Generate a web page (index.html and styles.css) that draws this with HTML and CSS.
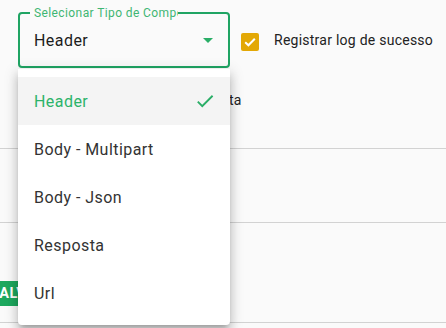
FILE: index.html
```html
<!DOCTYPE html>
<html lang="pt">
<head>
<meta charset="utf-8">
<title>Configuração</title>
<link rel="stylesheet" href="styles.css">
</head>
<body>
<div class="page">
  <div class="top-row">
    <div class="field">
      <span class="field-label">Selecionar Tipo de Componente</span>
      <span class="field-value">Header</span>
      <svg class="field-arrow" width="24" height="24" viewBox="0 0 24 24"><path d="M7 10l5 5 5-5z"/></svg>
    </div>
    <label class="check-row">
      <span class="checkbox"><svg width="18" height="18" viewBox="0 0 18 18"><path d="M4.2 9.2l3.2 3.1 6.4-6.6" fill="none" stroke="#fff" stroke-width="2"/></svg></span>
      <span class="check-label">Registrar log de sucesso</span>
    </label>
  </div>
  <div class="second-row">
    <label class="check-row">
      <span class="checkbox"><svg width="18" height="18" viewBox="0 0 18 18"><path d="M4.2 9.2l3.2 3.1 6.4-6.6" fill="none" stroke="#fff" stroke-width="2"/></svg></span>
      <span class="check-label">Registrar log de resposta</span>
    </label>
  </div>
  <div class="divider first"></div>
  <div class="section"></div>
  <div class="divider"></div>
  <div class="actions">
    <button class="save-btn">SALVAR</button>
  </div>
  <div class="divider last"></div>

  <ul class="menu">
    <li class="menu-item selected">Header
      <svg class="menu-check" width="22" height="22" viewBox="0 0 24 24"><path d="M9 16.17L4.83 12l-1.42 1.41L9 19 21 7l-1.41-1.41z"/></svg>
    </li>
    <li class="menu-item">Body - Multipart</li>
    <li class="menu-item">Body - Json</li>
    <li class="menu-item">Resposta</li>
    <li class="menu-item">Url</li>
  </ul>
</div>
</body>
</html>
```
FILE: styles.css
```css
html, body {
  margin: 0;
  padding: 0;
  background: #fafafa;
  width: 446px;
  height: 328px;
  overflow: hidden;
  font-family: Roboto, "Liberation Sans", sans-serif;
  color: #222;
}

.page {
  position: relative;
  height: 328px;
}

.top-row {
  display: flex;
  align-items: center;
  padding: 12px 0 0 18px;
}

.field {
  position: relative;
  box-sizing: border-box;
  width: 212px;
  height: 56px;
  border: 2px solid #1fa463;
  border-radius: 4px;
  display: flex;
  align-items: center;
  justify-content: space-between;
  padding: 0 8px 0 14px;
}

.field-label {
  position: absolute;
  top: -8px;
  left: 10px;
  width: 140px;
  padding: 0 4px;
  background: #fafafa;
  font-size: 12px;
  letter-spacing: 0.4px;
  line-height: 15px;
  color: #3fb673;
  white-space: nowrap;
  overflow: hidden;
}

.field-value {
  font-size: 16px;
  color: #1c1c1c;
  letter-spacing: 0.45px;
}

.field-arrow {
  fill: #2aae67;
}

.check-row {
  display: flex;
  align-items: center;
}

.top-row .check-row {
  margin-left: 11px;
}

.checkbox {
  width: 18px;
  height: 18px;
  border-radius: 2px;
  background: #e3a805;
  display: flex;
  margin-top: 3px;
}

.check-label {
  margin-left: 15px;
  font-size: 14px;
  letter-spacing: 0.25px;
  color: #222;
}

.second-row {
  margin-top: 12px;
  height: 40px;
  display: flex;
  align-items: center;
  padding-left: 42px;
}

.second-row .check-label {
  margin-left: 20px;
}

.divider {
  height: 1px;
  background: #d2d2d2;
}

.divider.first {
  margin-top: 28px;
}

.section {
  height: 73px;
}

.actions {
  margin-top: 58px;
  height: 25px;
  display: flex;
}

.save-btn {
  margin-left: -26px;
  height: 25px;
  border: none;
  border-radius: 3px;
  padding: 0 16px;
  background: #1da85e;
  color: #fff;
  font-family: Roboto, "Liberation Sans", sans-serif;
  font-weight: 700;
  font-size: 14.5px;
  letter-spacing: 0.4px;
}

.divider.last {
  margin-top: 16px;
}

.menu {
  position: absolute;
  left: 18px;
  top: 69px;
  width: 212px;
  margin: 0;
  padding: 8px 0;
  list-style: none;
  background: #fff;
  border-radius: 0 0 4px 4px;
  box-shadow: 0 5px 5px -3px rgba(0,0,0,0.2), 0 8px 10px 1px rgba(0,0,0,0.14), 0 3px 14px 2px rgba(0,0,0,0.12);
}

.menu-item {
  height: 48px;
  display: flex;
  align-items: center;
  justify-content: space-between;
  padding: 0 14px 0 16px;
  font-size: 16px;
  color: #333;
  letter-spacing: 0.45px;
}

.menu-item.selected {
  background: #f4f4f4;
  color: #2cb36a;
}

.menu-check {
  fill: #2aae67;
}
```
